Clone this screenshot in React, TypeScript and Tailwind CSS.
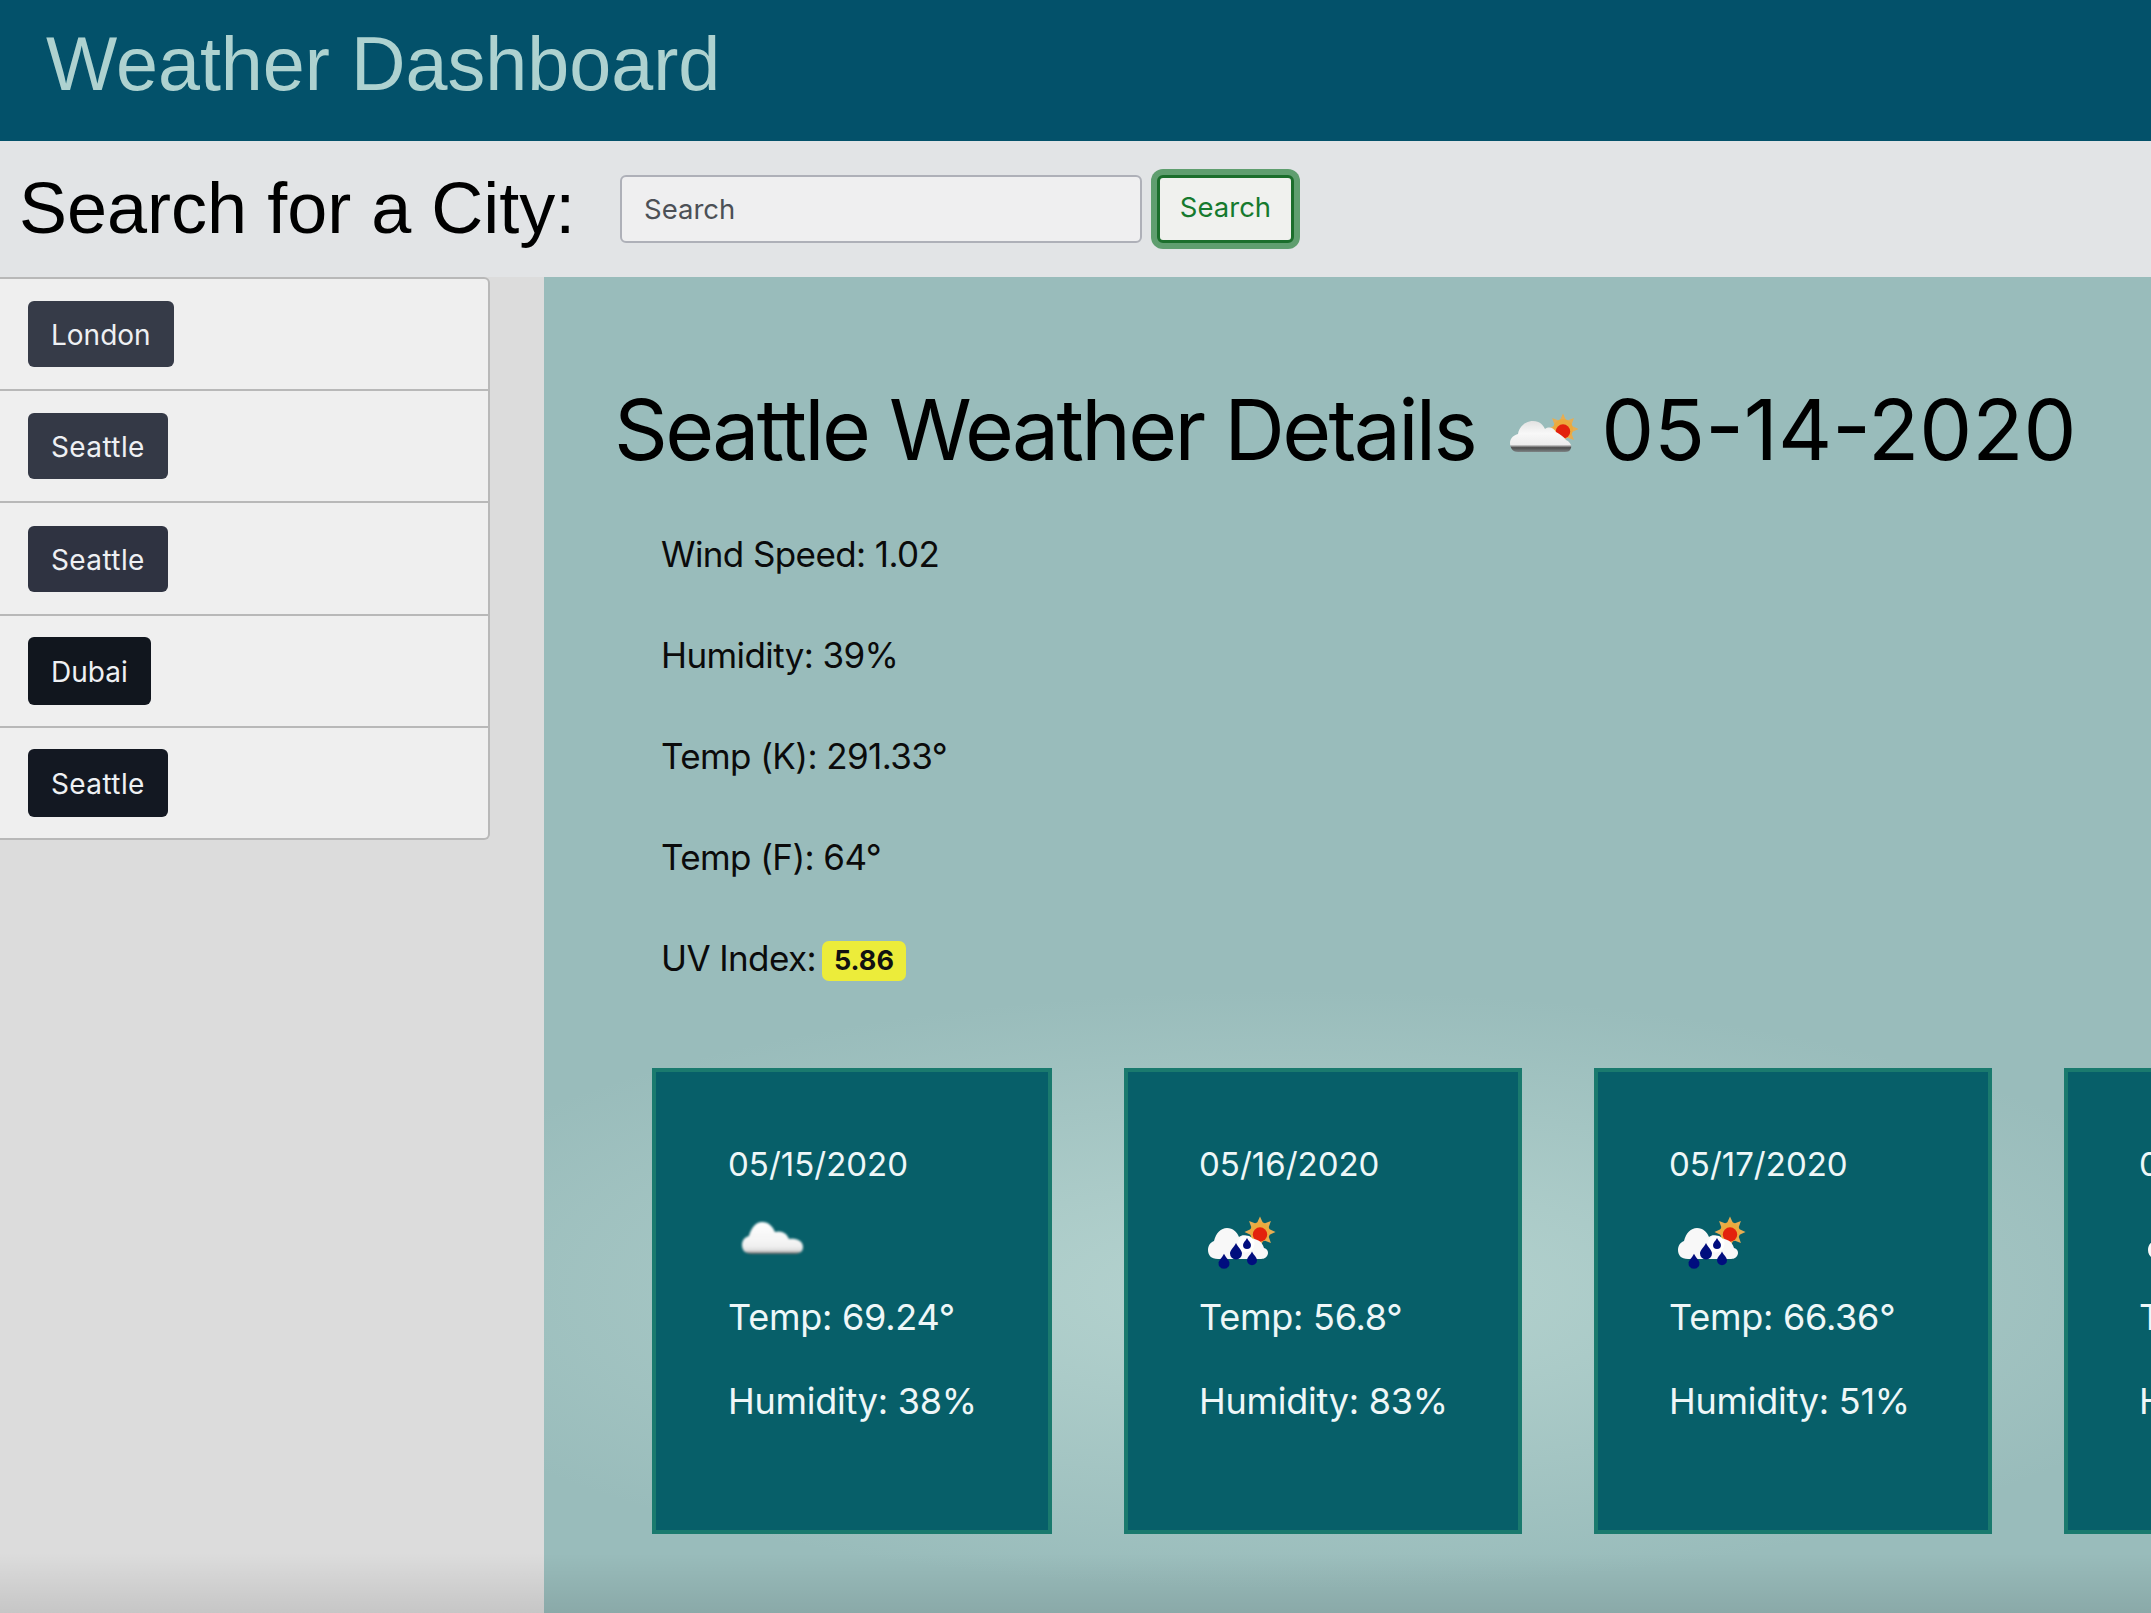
const cities = [
  { name: "London", color: "bg-[#363b48]", size: "h-[66px]" },
  { name: "Seattle", color: "bg-[#343946]", size: "h-[66px] tracking-[0.4px]" },
  { name: "Seattle", color: "bg-[#2f3341]", size: "h-[66px] tracking-[0.4px]" },
  { name: "Dubai", color: "bg-[#11161e]", size: "h-[68px]" },
  { name: "Seattle", color: "bg-[#131822]", size: "h-[68px] tracking-[0.4px]" },
];

const details = ["Wind Speed: 1.02", "Humidity: 39%", "Temp (K): 291.33°", "Temp (F): 64°"];

const forecast = [
  { date: "05/15/2020", icon: "cloud", temp: "69.24°", humidity: "38%", box: "w-[400px] pl-[72px]" },
  { date: "05/16/2020", icon: "rain", temp: "56.8°", humidity: "83%", box: "w-[398px] pl-[71px]" },
  { date: "05/17/2020", icon: "rain", temp: "66.36°", humidity: "51%", box: "w-[398px] pl-[71px]" },
  { date: "05/18/2020", icon: "rain", temp: "60.1°", humidity: "62%", box: "w-[398px] pl-[71px]" },
];

function Sun({ cx, cy, r }: { cx: number; cy: number; r: number }) {
  const rays = [0, 45, 90, 135, 180, 225, 270, 315];
  return (
    <g>
      {rays.map((a, i) => (
        <path
          key={i}
          d={`M${cx - r * 0.32} ${cy - r * 0.85} L${cx} ${cy - r * 1.55} L${cx + r * 0.32} ${cy - r * 0.85} Z`}
          fill="#e6ad52"
          transform={`rotate(${a} ${cx} ${cy})`}
        />
      ))}
      <circle cx={cx} cy={cy} r={r} fill="#ecaa3e" />
      <circle cx={cx} cy={cy + r * 0.25} r={r * 0.72} fill="#e3230f" />
    </g>
  );
}

function Drop({ x, y, s }: { x: number; y: number; s: number }) {
  return (
    <path
      d={`M${x} ${y - s * 1.5} C${x + s * 0.4} ${y - s * 0.7} ${x + s} ${y - s * 0.3} ${x + s} ${y + s * 0.25} A${s} ${s} 0 0 1 ${x - s} ${y + s * 0.25} C${x - s} ${y - s * 0.3} ${x - s * 0.4} ${y - s * 0.7} ${x} ${y - s * 1.5} Z`}
      fill="#06107e"
    />
  );
}

function CloudIcon({ id }: { id: string }) {
  return (
    <svg width="90" height="70" viewBox="0 0 90 70" className="block">
      <defs>
        <linearGradient id={id} x1="0" y1="0" x2="0" y2="1">
          <stop offset="0" stopColor="#ffffff" />
          <stop offset="0.75" stopColor="#f1f1f1" />
          <stop offset="0.9" stopColor="#dcdcdc" />
          <stop offset="1" stopColor="#4d4d4d" />
        </linearGradient>
        <filter id={`${id}-blur`}>
          <feGaussianBlur stdDeviation="0.8" />
        </filter>
      </defs>
      <path
        d="M24 45 C17 45 14 41 14 36 C14 31 17 28 21 27 C23 19 28 13 34 13 C41 13 45 18 47 23 C53 21 59 24 61 30 C67 29 75 31 75 38 C75 43 71 45 67 45 Z"
        fill={`url(#${id})`}
        filter={`url(#${id}-blur)`}
      />
    </svg>
  );
}

function RainIcon({ id }: { id: string }) {
  return (
    <svg width="90" height="70" viewBox="0 0 90 70" className="block">
      <defs>
        <filter id={`${id}-blur`}>
          <feGaussianBlur stdDeviation="0.6" />
        </filter>
      </defs>
      <g filter={`url(#${id}-blur)`}>
        <Sun cx={61} cy={23} r={10} />
        <path
          d="M19 50 C12 50 9 46 9 41 C9 36 12 33 15 32 C17 24 22 19 28 19 C34 19 38 23 40 28 C44 25 48 26 50 30 C55 29 63 31 65 39 C69 40 70 44 68 47 C66 50 63 50 60 50 Z"
          fill="#f8f8f8"
        />
        <circle cx="47" cy="35" r="8.5" fill="#ffffff" />
        <Drop x={48} y={35} s={4} />
        <Drop x={37} y={43} s={6} />
        <Drop x={53} y={50} s={5} />
        <Drop x={25} y={53} s={5.5} />
      </g>
    </svg>
  );
}

function HeaderIcon() {
  return (
    <svg width="80" height="50" viewBox="0 0 80 50" className="block">
      <defs>
        <linearGradient id="header-cloud" x1="0" y1="0" x2="0" y2="1">
          <stop offset="0" stopColor="#e2e2e2" />
          <stop offset="0.4" stopColor="#f8f8f8" />
          <stop offset="0.76" stopColor="#ececec" />
          <stop offset="0.86" stopColor="#4b4b4b" />
          <stop offset="1" stopColor="#7d8485" />
        </linearGradient>
        <filter id="header-blur">
          <feGaussianBlur stdDeviation="0.7" />
        </filter>
      </defs>
      <g filter="url(#header-blur)">
        <Sun cx={57} cy={24} r={10} />
        <path
          d="M12 47 C6 47 4 42 4 38 C4 33 8 30 12 29 C13 22 19 16 27 16 C34 16 37 20 39 24 C43 21 48 23 50 27 C54 29 58 32 60 35 C64 37 66 40 65 43 C64 46 62 47 59 47 Z"
          fill="url(#header-cloud)"
        />
      </g>
    </svg>
  );
}

export default function App() {
  return (
    <div className="relative w-[2151px] h-[1613px] overflow-hidden bg-[#dcdcdc] font-['Inter',sans-serif]">
      <header className="h-[141px] bg-[#03516a] pl-[46px] pt-[23px]">
        <h1 className="font-['Liberation_Sans',sans-serif] text-[75.5px] leading-[82px] text-[#aed2d0]">
          Weather Dashboard
        </h1>
      </header>

      <div className="flex h-[136px] items-center bg-[#e2e4e6] pl-[19px]">
        <h2 className="w-[601px] pb-[2px] font-['Liberation_Sans',sans-serif] text-[72px] leading-[80px] text-black">
          Search for a City:
        </h2>
        <input
          placeholder="Search"
          className="h-[68px] w-[522px] rounded-[6px] border-2 border-[#aeb0b8] bg-[#efeff0] px-[22px] text-[27.5px] placeholder:text-[#4c5056]"
        />
        <button className="ml-[15px] h-[68px] w-[137px] rounded-[6px] border-[3px] border-[#1b6e2c] bg-[#f0f1ee] pb-[2px] text-[27.5px] text-[#167a2e] shadow-[0_0_0_6px_#5f9e6f]">
          Search
        </button>
      </div>

      <div className="flex">
        <aside className="w-[544px] shrink-0">
          <ul className="flex h-[563px] w-[490px] flex-col rounded-r-[6px] border-y-2 border-r-2 border-[#b8b8b8] bg-[#efefef]">
            {cities.map((city, i) => (
              <li key={i} className="flex flex-1 items-center border-b-2 border-[#b8b8b8] pl-[28px] last:border-b-0">
                <button className={`rounded-[6px] px-[23px] pt-[2px] text-[28px] text-[#eef0f3] ${city.size} ${city.color}`}>
                  {city.name}
                </button>
              </li>
            ))}
          </ul>
        </aside>

        <main className="h-[1336px] flex-1 overflow-hidden bg-[#99bcbb] bg-[radial-gradient(ellipse_950px_300px_at_750px_1013px,#b6d4d0,transparent)] pl-[70px] pt-[103px]">
          <div className="flex h-[100px] items-center whitespace-nowrap text-[84px] leading-[100px] text-black">
            <span className="tracking-[-2.7px]">Seattle Weather Details</span>
            <span className="ml-[31px]"><HeaderIcon /></span>
            <span className="ml-[15px]">05-14-2020</span>
          </div>

          <div className="mt-[50px] flex flex-col gap-[53px] pl-[47px] text-[35px] leading-[48px] tracking-[-0.6px] text-[#0b0b0b]">
            {details.map((d) => (
              <p key={d}>{d}</p>
            ))}
            <p className="flex items-center">
              UV Index:
              <span className="ml-[6px] mt-[5px] flex h-[40px] w-[84px] items-center justify-center rounded-[7px] bg-[#ecec3a] text-[27px] font-bold tracking-normal text-[#111]">
                5.86
              </span>
            </p>
          </div>

          <div className="mt-[86px] ml-[38px] flex gap-[72px]">
            {forecast.map((day, i) => (
              <div
                key={day.date}
                className={`h-[466px] shrink-0 border-[4px] border-[#1a7a6e] bg-[#075f69] pt-[68px] text-[36px] leading-[48px] tracking-[-0.25px] text-[#eef7f8] ${day.box}`}
              >
                <p className="whitespace-nowrap text-[33px] tracking-normal">{day.date}</p>
                <div className="mt-[21px]">
                  {day.icon === "cloud" ? <CloudIcon id={`cloud-${i}`} /> : <RainIcon id={`rain-${i}`} />}
                </div>
                <p className="mt-[14px] whitespace-nowrap">Temp: {day.temp}</p>
                <p className="mt-[36px] whitespace-nowrap">Humidity: {day.humidity}</p>
              </div>
            ))}
          </div>
        </main>
      </div>

      <div className="pointer-events-none absolute inset-x-0 bottom-0 h-[60px] bg-gradient-to-t from-black/10 to-transparent" />
    </div>
  );
}
